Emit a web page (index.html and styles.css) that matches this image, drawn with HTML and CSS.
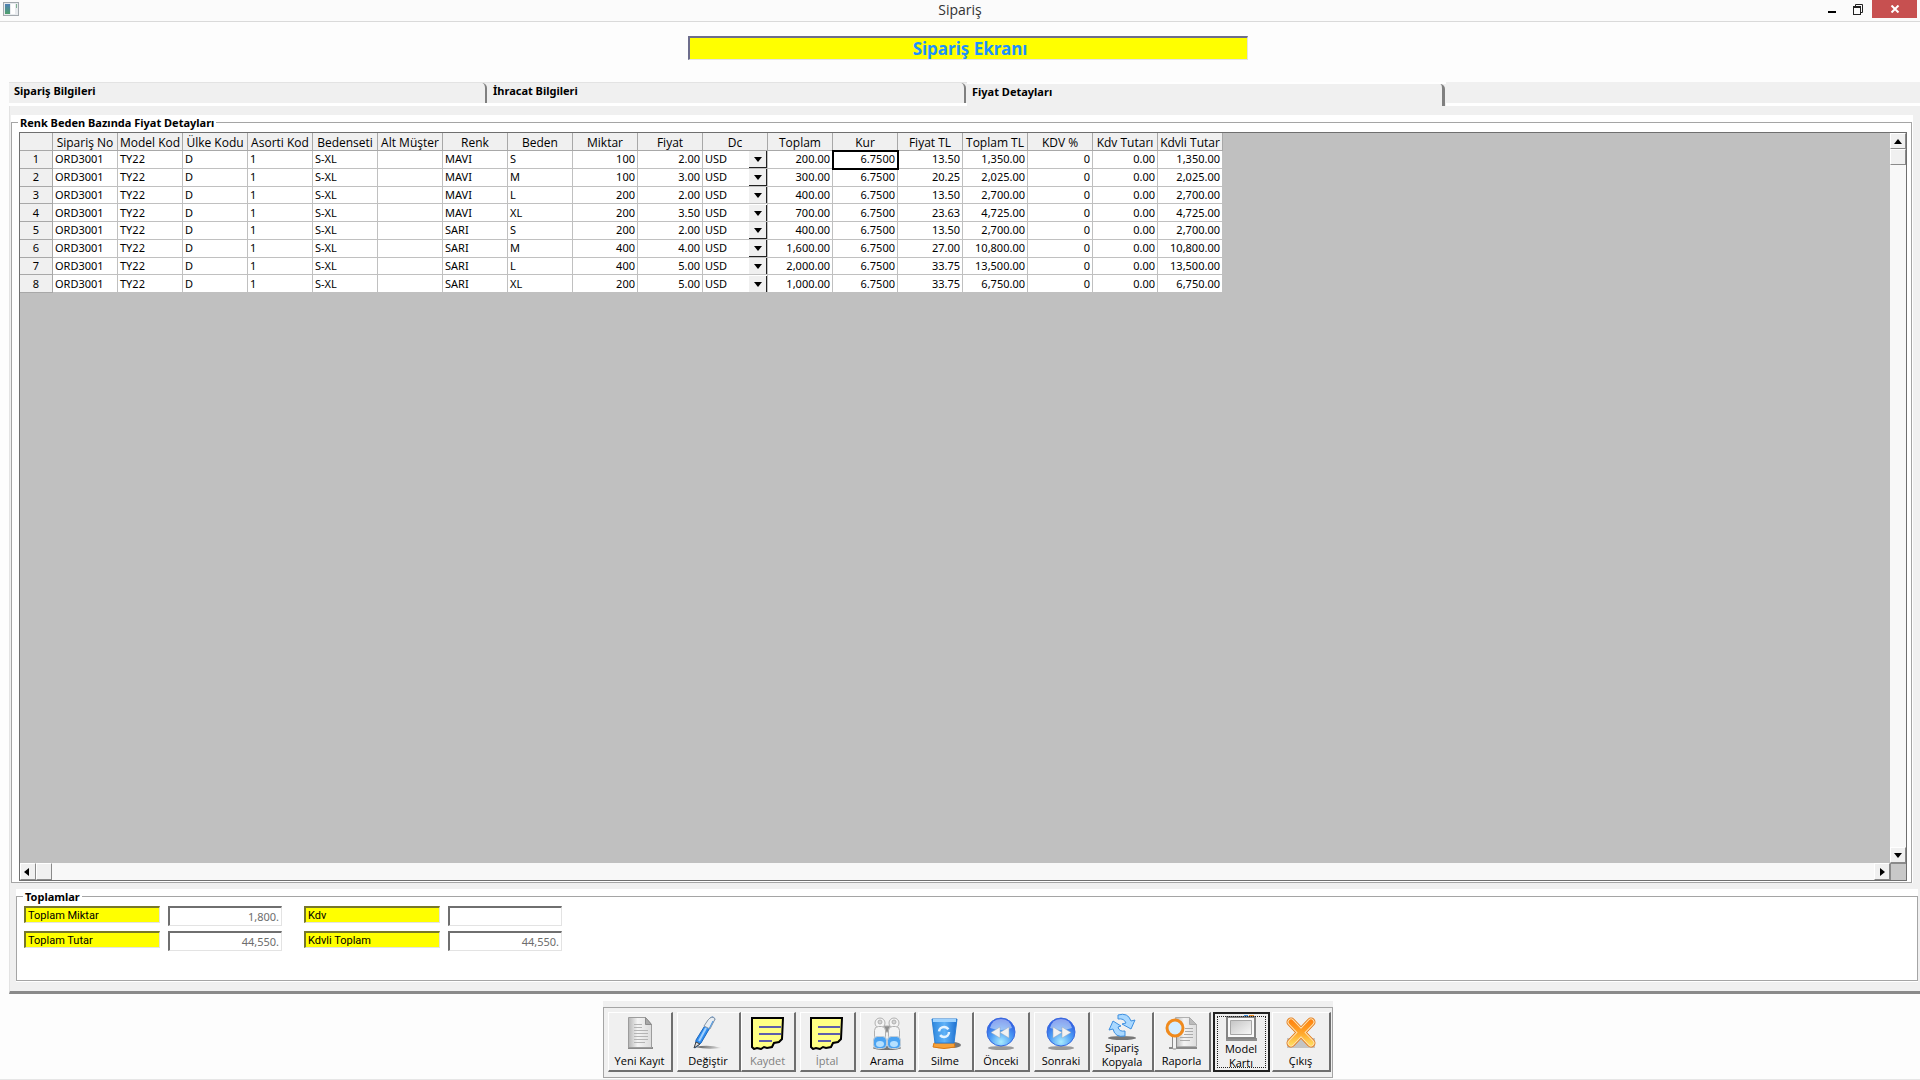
FILE: index.html
```
<!DOCTYPE html>
<html lang="tr">
<head>
  <meta charset="UTF-8" />
  <meta name="viewport" content="width=device-width, initial-scale=1.0"/>
  <title>Sipariş</title>
  <link rel="stylesheet" href="styles.css">
</head>
<body>
  <header class="titlebar">
    <svg class="app-icon" viewBox="0 0 16 14">
      <defs>
        <linearGradient id="appFill" x1="0" y1="0" x2="0" y2="1">
          <stop offset="0" stop-color="#4f7fb5"/>
          <stop offset="1" stop-color="#4fa06a"/>
        </linearGradient>
      </defs>
      <rect x="0.5" y="0.5" width="15" height="13" fill="#e8ebee" stroke="#a3a9ae"/>
      <rect x="2" y="2" width="5" height="10" fill="url(#appFill)"/>
      <rect x="8" y="2" width="4" height="10" fill="#fff"/>
      <rect x="13" y="2" width="1" height="4" fill="#7fb08f"/>
    </svg>
    <span class="window-title">Sipariş</span>
    <div class="window-buttons">
      <button type="button" class="win-btn" aria-label="Simge durumuna küçült">
        <svg width="10" height="12" viewBox="0 0 10 12"><rect x="0" y="7" width="8" height="2" fill="#000"/></svg>
      </button>
      <button type="button" class="win-btn" aria-label="Önceki boyut">
        <svg width="12" height="12" viewBox="0 0 12 12" fill="none" stroke="#222">
          <path d="M2.500 2V0.500h7v8H8"/>
          <rect x="0.500" y="2.500" width="7" height="8"/>
          <path d="M0 3.500h8"/>
        </svg>
      </button>
      <button type="button" class="win-btn win-close" aria-label="Kapat">
        <svg width="10" height="8" viewBox="0 0 10 8" stroke="#fff" stroke-width="2"><path d="M1.500 0.500l7 7M8.500 0.500l-7 7"/></svg>
      </button>
    </div>
  </header>

  <main class="content">
    <h1 class="banner">Sipariş Ekranı</h1>

    <nav class="tabs">
      <a href="#siparis" class="tab">Sipariş Bilgileri</a>
      <a href="#ihracat" class="tab">İhracat Bilgileri</a>
      <a href="#fiyat" class="tab active">Fiyat Detayları</a>
      <div class="tab-filler"></div>
    </nav>

    <section class="panel" id="fiyat">
      <div class="group group-prices">
        <div class="group-box">
          <h2>Renk Beden Bazında Fiyat Detayları</h2>
          <div class="grid-view">
            <div class="grid-body">
              <table class="price-table">
                <thead>
                  <tr>
                    <th class="row-no"></th>
                    <th>Sipariş No</th>
                    <th>Model Kod</th>
                    <th>Ülke Kodu</th>
                    <th>Asorti Kod</th>
                    <th>Bedenseti</th>
                    <th>Alt Müşter</th>
                    <th>Renk</th>
                    <th>Beden</th>
                    <th>Miktar</th>
                    <th>Fiyat</th>
                    <th>Dc</th>
                    <th>Toplam</th>
                    <th>Kur</th>
                    <th>Fiyat TL</th>
                    <th>Toplam TL</th>
                    <th>KDV %</th>
                    <th>Kdv Tutarı</th>
                    <th>Kdvli Tutar</th>
                  </tr>
                </thead>
                <tbody id="priceRows"></tbody>
              </table>
            </div>
            <div class="scroll-v">
              <button type="button" class="scroll-btn" aria-label="Yukarı"><svg width="8" height="5" viewBox="0 0 8 5"><path d="M0 5L4 0l4 5z"/></svg></button>
              <div class="scroll-thumb"></div>
              <div class="scroll-track"></div>
              <button type="button" class="scroll-btn" aria-label="Aşağı"><svg width="8" height="5" viewBox="0 0 8 5"><path d="M0 0h8L4 5z"/></svg></button>
            </div>
            <div class="scroll-h">
              <button type="button" class="scroll-btn" aria-label="Sol"><svg width="8" height="8" viewBox="0 0 8 8"><path d="M5 0v8L0 4z"/></svg></button>
              <div class="scroll-thumb"></div>
              <div class="scroll-track"></div>
              <button type="button" class="scroll-btn" aria-label="Sağ"><svg width="5" height="8" viewBox="0 0 5 8"><path d="M0 0l5 4-5 4z"/></svg></button>
            </div>
            <div class="scroll-corner"></div>
          </div>
        </div>
      </div>

      <div class="group group-totals">
        <div class="group-box">
          <h2>Toplamlar</h2>
          <form class="totals">
            <div class="totals-col">
              <label for="toplamMiktar">Toplam Miktar</label>
              <input type="text" id="toplamMiktar" value="1,800." disabled>
              <label for="toplamTutar">Toplam Tutar</label>
              <input type="text" id="toplamTutar" value="44,550." disabled>
            </div>
            <div class="totals-col">
              <label for="kdv">Kdv</label>
              <input type="text" id="kdv" value="" disabled>
              <label for="kdvliToplam">Kdvli Toplam</label>
              <input type="text" id="kdvliToplam" value="44,550." disabled>
            </div>
          </form>
        </div>
      </div>
    </section>

    <footer class="toolbar">
      <div class="toolbar-frame">
        <div class="btn-group">
          <button type="button" class="tool w65">
            <svg viewBox="0 0 34 34">
              <defs>
                <linearGradient id="paper" x1="0" y1="0" x2="1" y2="0">
                  <stop offset="0" stop-color="#b5b5b5"/><stop offset="0.4" stop-color="#f4f4f4"/><stop offset="1" stop-color="#dcdcdc"/>
                </linearGradient>
              </defs>
              <path d="M5 31h25v2H5z" fill="#8a8a8a"/>
              <path d="M5.500 1.500h17l6 7v23h-23z" fill="url(#paper)" stroke="#9c9c9c"/>
              <path d="M22.500 1.500v7h6z" fill="#a8a8a8" stroke="#8c8c8c"/>
              <path d="M11 8.500h8M11 11.500h8M11 14.500h14M11 17.500h14M11 20.500h14M11 23.500h14M11 26.500h11" stroke="#b4b4b4"/>
            </svg>
            <span>Yeni Kayıt</span>
          </button>
        </div>
        <div class="btn-group">
          <button type="button" class="tool w64">
            <svg viewBox="0 0 34 34">
              <defs>
                <linearGradient id="shade" x1="0" y1="0" x2="1" y2="0">
                  <stop offset="0" stop-color="#555"/><stop offset="1" stop-color="#ddd"/>
                </linearGradient>
              </defs>
              <path d="M4 31q14-3 26 1q-14 2-26-1z" fill="url(#shade)"/>
              <path d="M18 3q4-4 6 0L10 27l-6 5 1-8z" fill="#2f8df0" stroke="#1b66bd"/>
              <path d="M17 4q4-5 7-1l-5 10-6-3z" fill="#e9eef3" stroke="#8c9aa8"/>
              <path d="M15 12L8 25" stroke="#9fd0ff" stroke-width="2"/>
              <path d="M22 5l-4 8" stroke="#3b8ee0" stroke-width="1"/>
              <path d="M5 26l4 2-6 4z" fill="#ddd" stroke="#444"/>
            </svg>
            <span>Değiştir</span>
          </button>
          <button type="button" class="tool w55" disabled>
            <svg viewBox="0 0 34 34">
              <path d="M1 2h31l-1 21-3 3-5 1-2 4-5 1-3-1-3 2-4-1-3 1-2-2z" fill="#ffff84" stroke="#000" stroke-width="2"/>
              <path d="M8 11h22M8 18h22M8 25h13" stroke="#2a2ab8" stroke-width="1.500"/>
            </svg>
            <span>Kaydet</span>
          </button>
        </div>
        <div class="btn-group">
          <button type="button" class="tool w56" disabled>
            <svg viewBox="0 0 34 34">
              <path d="M1 2h31l-1 21-3 3-5 1-2 4-5 1-3-1-3 2-4-1-3 1-2-2z" fill="#ffff84" stroke="#000" stroke-width="2"/>
              <path d="M8 11h22M8 18h22M8 25h13" stroke="#2a2ab8" stroke-width="1.500"/>
            </svg>
            <span>İptal</span>
          </button>
        </div>
        <div class="btn-group">
          <button type="button" class="tool w56">
            <svg viewBox="0 0 34 34">
              <ellipse cx="17" cy="32" rx="14" ry="2" fill="#777"/>
              <g fill="#f4f4f4" stroke="#b0b0b0">
                <circle cx="10" cy="7" r="5"/><circle cx="24" cy="7" r="5"/>
                <circle cx="10" cy="6" r="2" fill="#d4d4d4"/><circle cx="24" cy="6" r="2" fill="#d4d4d4"/>
                <path d="M14 10h6v6h-6z" fill="#8d8d8d"/>
                <rect x="4.500" y="10.500" width="11" height="14" rx="4"/>
                <rect x="18.500" y="10.500" width="11" height="14" rx="4"/>
              </g>
              <rect x="3.500" y="20.500" width="13" height="12" rx="4" fill="#4ba3f2" stroke="#c3ccd4"/>
              <rect x="17.500" y="20.500" width="13" height="12" rx="4" fill="#4ba3f2" stroke="#c3ccd4"/>
              <ellipse cx="10" cy="28" rx="4" ry="3" fill="#b5e0ff"/>
              <ellipse cx="24" cy="28" rx="4" ry="3" fill="#b5e0ff"/>
            </svg>
            <span>Arama</span>
          </button>
        </div>
        <div class="btn-group tight">
          <button type="button" class="tool w56">
            <svg viewBox="0 0 34 34">
              <defs>
                <linearGradient id="bin" x1="0" y1="0" x2="1" y2="0">
                  <stop offset="0" stop-color="#2d86dc"/><stop offset="0.500" stop-color="#5fb2f8"/><stop offset="1" stop-color="#1d6fd0"/>
                </linearGradient>
              </defs>
              <ellipse cx="25" cy="29" rx="8" ry="3" fill="#777"/>
              <path d="M6 27h20l1 4q-11 3-22 0z" fill="#f7a138" stroke="#d97a16"/>
              <path d="M4 3h25l-3 24H7z" fill="url(#bin)" stroke="#2b7fd4"/>
              <path d="M5 3h23v3H5z" fill="#9ed3ff"/>
              <circle cx="16" cy="16" r="5" fill="none" stroke="#e4f3ff" stroke-width="2.500" stroke-dasharray="12 4"/>
            </svg>
            <span>Silme</span>
          </button>
          <button type="button" class="tool w56">
            <svg viewBox="0 0 34 34">
              <defs>
                <radialGradient id="ball" cx="0.5" cy="0.85" r="0.8">
                  <stop offset="0" stop-color="#a9ecff"/><stop offset="0.5" stop-color="#4d9df5"/><stop offset="1" stop-color="#2a55e0"/>
                </radialGradient>
              </defs>
              <ellipse cx="17" cy="32" rx="13" ry="2" fill="#9a9a9a"/>
              <circle cx="17" cy="16" r="14" fill="url(#ball)" stroke="#3a6be0"/>
              <path d="M6 12q2-9 11-9t11 9q-11 4-22 0z" fill="#fff" opacity="0.45"/>
              <path d="M16 11v11l-9-5.500zM25 11v11l-9-5.500z" fill="#f2f2f2" stroke="#9aa6b5" stroke-width="0.500"/>
            </svg>
            <span>Önceki</span>
          </button>
        </div>
        <div class="btn-group">
          <button type="button" class="tool w56">
            <svg viewBox="0 0 34 34">
              <ellipse cx="17" cy="32" rx="13" ry="2" fill="#9a9a9a"/>
              <circle cx="17" cy="16" r="14" fill="url(#ball)" stroke="#3a6be0"/>
              <path d="M6 12q2-9 11-9t11 9q-11 4-22 0z" fill="#fff" opacity="0.45"/>
              <path d="M9 11v11l9-5.500zM18 11v11l9-5.500z" fill="#f2f2f2" stroke="#9aa6b5" stroke-width="0.500"/>
            </svg>
            <span>Sonraki</span>
          </button>
        </div>
        <div class="btn-group tight">
          <button type="button" class="tool w62 two-line">
            <svg viewBox="0 0 34 28">
              <ellipse cx="17" cy="25" rx="14" ry="2" fill="#777"/>
              <g fill="#a9d8ff" stroke="#3d8fe0">
                <path d="M13 2q10-3 13 6l4-1-4 9-9-5 4-1q-2-5-8-4z"/>
                <path d="M20 23q-10 2-12-7l-4 1 4-9 8 5-3 1q1 5 7 4z"/>
              </g>
            </svg>
            <span>Sipariş Kopyala</span>
          </button>
          <button type="button" class="tool w57">
            <svg viewBox="0 0 34 34">
              <path d="M4 31h28v2H4z" fill="#8a8a8a"/>
              <path d="M10.500 1.500h14l7 7v22h-21z" fill="url(#paper)" stroke="#b0b0b0"/>
              <path d="M24.500 1.500v7h7z" fill="#bbb" stroke="#aaa"/>
              <path d="M20 12.500h8M20 15.500h8M19 18.500h9M15 21.500h13M15 24.500h10" stroke="#aaa"/>
              <rect x="7.500" y="20" width="4" height="13" rx="1" fill="#f2f2f2" stroke="#8a8a8a"/>
              <circle cx="10" cy="12" r="8" fill="#d4edff" stroke="#f08a1d" stroke-width="3"/>
            </svg>
            <span>Raporla</span>
          </button>
        </div>
        <div class="btn-group tight">
          <button type="button" class="tool w57 two-line focused">
            <svg viewBox="0 0 34 28">
              <defs>
                <linearGradient id="card" x1="0" y1="0" x2="1" y2="1">
                  <stop offset="0" stop-color="#c4c4c4"/><stop offset="1" stop-color="#f8f8f8"/>
                </linearGradient>
              </defs>
              <path d="M2 24h31v3H2z" fill="#8f8f8f"/>
              <path d="M3 3h28v21H3z" fill="#fafafa" stroke="#858585" stroke-width="2"/>
              <path d="M6.500 6.500h21v14h-21z" fill="url(#card)" stroke="#a5a5a5"/>
              <path d="M20 1.500h4" stroke="#3d8fe0"/>
              <path d="M25 1.500h5" stroke="#f08a1d"/>
            </svg>
            <span>Model Kartı</span>
          </button>
        </div>
        <div class="btn-group tight">
          <button type="button" class="tool w59">
            <svg viewBox="0 0 34 34">
              <defs>
                <linearGradient id="cross" gradientUnits="userSpaceOnUse" x1="0" y1="2" x2="0" y2="32">
                  <stop offset="0" stop-color="#ff7d0a"/><stop offset="0.500" stop-color="#ffa62b"/><stop offset="1" stop-color="#ffe96b"/>
                </linearGradient>
              </defs>
              <path d="M3 22h28v10H3z" fill="#c4c4c4"/>
              <g fill="none" stroke-linecap="round">
                <path d="M7 6l20 21M27 6L7 27" stroke="#e07a1a" stroke-width="9"/>
                <path d="M7 6l20 21M27 6L7 27" stroke="#ffe2b0" stroke-width="7"/>
                <path d="M7 6l20 21M27 6L7 27" stroke="url(#cross)" stroke-width="5"/>
              </g>
            </svg>
            <span>Çıkış</span>
          </button>
        </div>
      </div>
    </footer>
  </main>

  <script>
    // renk, beden, miktar, fiyat, toplam, kur, fiyat TL, toplam TL, KDV %, kdv tutarı, kdvli tutar
    const rows = [
      ['MAVI', 'S', '100', '2.00', '200.00', '6.7500', '13.50', '1,350.00', '0', '0.00', '1,350.00'],
      ['MAVI', 'M', '100', '3.00', '300.00', '6.7500', '20.25', '2,025.00', '0', '0.00', '2,025.00'],
      ['MAVI', 'L', '200', '2.00', '400.00', '6.7500', '13.50', '2,700.00', '0', '0.00', '2,700.00'],
      ['MAVI', 'XL', '200', '3.50', '700.00', '6.7500', '23.63', '4,725.00', '0', '0.00', '4,725.00'],
      ['SARI', 'S', '200', '2.00', '400.00', '6.7500', '13.50', '2,700.00', '0', '0.00', '2,700.00'],
      ['SARI', 'M', '400', '4.00', '1,600.00', '6.7500', '27.00', '10,800.00', '0', '0.00', '10,800.00'],
      ['SARI', 'L', '400', '5.00', '2,000.00', '6.7500', '33.75', '13,500.00', '0', '0.00', '13,500.00'],
      ['SARI', 'XL', '200', '5.00', '1,000.00', '6.7500', '33.75', '6,750.00', '0', '0.00', '6,750.00']
    ];

    const num = v => `<td class="num">${v}</td>`;

    document.getElementById('priceRows').innerHTML = rows.map((r, i) => `
      <tr>
        <th class="row-no" scope="row">${i + 1}</th>
        <td>ORD3001</td><td>TY22</td><td>D</td><td>1</td><td>S-XL</td><td></td>
        <td>${r[0]}</td><td>${r[1]}</td>${num(r[2])}${num(r[3])}
        <td class="currency"><div class="combo"><select aria-label="Dc ${i + 1}"><option>USD</option><option>EUR</option><option>TL</option></select></div></td>
        ${num(r[4])}
        <td class="num${i === 0 ? ' selected' : ''}">${r[5]}</td>
        ${r.slice(6).map(num).join('')}
      </tr>`).join('');
  </script>
</body>
</html>
```
FILE: styles.css
```
* {
    margin: 0;
    padding: 0;
    box-sizing: border-box;
}
body {
    display: flex;
    flex-direction: column;
    min-height: 100vh;
    background: #fdfdfd;
    border-bottom: 1px solid #e6e6e6;
    color: #000;
    font-family: 'Noto Sans', 'Open Sans', sans-serif;
    font-size: 11px;
    line-height: 14px;
}
button, input, select {
    font: inherit;
    color: inherit;
}

/* window title bar */
.titlebar {
    display: grid;
    grid-template-columns: 1fr auto 1fr;
    height: 22px;
    padding: 0 3px;
    background: #fbfbfb;
    border-bottom: 1px solid #dadada;
}
.app-icon {
    width: 16px;
    height: 14px;
    margin-top: 2px;
}
.window-title {
    font-family: 'Open Sans', sans-serif;
    font-size: 14px;
    line-height: 20px;
    color: #333;
}
.window-buttons {
    display: flex;
    justify-content: flex-end;
}
.win-btn {
    width: 26px;
    height: 18px;
    border: none;
    background: none;
}
.win-btn svg {
    display: block;
    margin: 2px auto 0;
}
.win-close {
    width: 45px;
    background: #c75050;
}
.win-close svg {
    margin-top: 0;
}

.content {
    flex: 1;
    display: flex;
    flex-direction: column;
    padding-left: 9px;
}
.banner {
    align-self: center;
    width: 560px;
    margin: 14px 0 22px 6px;
    padding-left: 4px;
    border: 1px solid #e3e3e3;
    border-top: 2px solid #6d6d8c;
    border-left: 2px solid #6d6d8c;
    background: #ffff00;
    color: #1e90ff;
    text-align: center;
    font-size: 17px;
    line-height: 21px;
}

/* tabs */
.tabs {
    display: flex;
    font-weight: bold;
}
.tab {
    position: relative;
    width: 479px;
    height: 24px;
    padding: 1px 5px;
    border-top: 1px solid #e3e3e3;
    border-bottom: 3px solid #fff;
    background: #f0f0f0;
    color: #000;
    text-decoration: none;
}
.tab::after {
    content: "";
    position: absolute;
    top: 0;
    right: 1px;
    width: 5px;
    height: 20px;
    border-right: 2px solid #808080;
    border-top-right-radius: 5px;
}
.tab.active {
    border-top: 2px solid #fff;
    border-bottom-color: #f0f0f0;
}
.tab.active::after {
    height: 22px;
    border-right-width: 3px;
}
.tab-filler {
    flex: 1;
    background: #f0f0f0;
    border-bottom: 3px solid #fff;
}

.panel {
    flex: 1;
    display: flex;
    flex-direction: column;
    gap: 6px;
    padding: 9px 2px 9px 1px;
    background: #f0f0f0;
    border-left: 1px solid #e3e3e3;
    border-bottom: 3px solid #8a8a8a;
}
.group {
    display: flex;
    flex-direction: column;
    padding-top: 7px;
    background: #fff;
}
.group-prices {
    flex: 1;
    margin-right: 5px;
    padding-right: 1px;
}
.group-totals {
    margin-left: 5px;
    padding-bottom: 1px;
}
.group-box {
    flex: 1;
    display: flex;
    flex-direction: column;
    border: 1px solid #a5a5a5;
}
.group-box h2 {
    align-self: flex-start;
    margin: -7px 0 0 6px;
    padding: 0 2px;
    background: #fff;
    font-size: 11px;
    font-weight: bold;
    line-height: 14px;
}

/* price grid */
.grid-view {
    flex: 1;
    display: grid;
    grid-template-columns: 1fr 16px;
    grid-template-rows: 1fr 17px;
    margin: 2px 4px 1px 7px;
    border: 1px solid #6f6f6f;
    background: #c0c0c0;
}
.grid-body {
    overflow: hidden;
}
.price-table {
    width: 1203px;
    height: 160px;
    table-layout: fixed;
    border-collapse: separate;
    border-spacing: 0;
    line-height: 14px;
}
.price-table thead tr {
    height: 18px;
}
.price-table th, .price-table td {
    border-right: 1px solid #c0c0c0;
    border-bottom: 1px solid #c0c0c0;
    white-space: nowrap;
    overflow: hidden;
}
.price-table th {
    background: #f0f0f0;
    border-color: #a8a8a8;
    font-weight: normal;
}
.price-table thead th {
    padding-top: 2px;
    font-family: 'Open Sans', sans-serif;
    font-size: 12px;
}
.price-table .row-no {
    width: 33px;
}
.price-table td {
    padding: 0 2px;
    background: #fff;
}
.price-table .num {
    text-align: right;
}
.price-table td.selected {
    outline: 2px solid #000;
    outline-offset: -1px;
}
.price-table td.currency {
    padding: 0;
}
.combo {
    position: relative;
    height: 16px;
}
.combo select {
    display: block;
    width: 100%;
    height: 16px;
    padding-left: 2px;
    border: none;
    background: #fff;
    line-height: 14px;
    appearance: none;
}
.combo::before {
    content: "";
    position: absolute;
    top: 0;
    right: 0;
    width: 17px;
    height: 16px;
    background: #f0f0f0;
    border-right: 1px solid #222;
    border-bottom: 1px solid #222;
    pointer-events: none;
}
.combo::after {
    content: "";
    position: absolute;
    top: 6px;
    right: 5px;
    border: 4px solid transparent;
    border-top: 5px solid #000;
    border-bottom: none;
    pointer-events: none;
}

/* classic scroll bars */
.scroll-v, .scroll-h {
    display: flex;
    background: #f8f8f8;
}
.scroll-v {
    flex-direction: column;
}
.scroll-track {
    flex: 1;
}
.scroll-btn, .scroll-thumb {
    display: flex;
    align-items: center;
    justify-content: center;
    width: 16px;
    height: 16px;
    background: #f0f0f0;
    border: 1px solid #fff;
    border-right-color: #8a8a8a;
    border-bottom-color: #8a8a8a;
}
.scroll-h .scroll-btn, .scroll-h .scroll-thumb {
    height: 17px;
}
.scroll-corner {
    background: #c8c8c8;
    border-top: 1px solid #8a8a8a;
    border-left: 1px solid #8a8a8a;
}

/* totals */
.totals {
    display: flex;
    gap: 22px;
    margin: 2px 0 29px 7px;
}
.totals-col {
    display: grid;
    grid-template-columns: 136px 114px;
    gap: 5px 8px;
}
.totals label {
    height: 17px;
    padding-left: 2px;
    background: #ffff00;
    border: 1px solid #e3e3e3;
    border-top: 2px solid #77772a;
    border-left: 2px solid #77772a;
    font-family: Roboto, sans-serif;
    line-height: 16px;
}
.totals input {
    width: 114px;
    height: 20px;
    padding: 0 2px;
    border: 1px solid #e3e3e3;
    border-top: 2px solid #6f6f6f;
    border-left: 2px solid #6f6f6f;
    background: #fff;
    color: #6d6d6d;
    text-align: right;
}

/* bottom toolbar */
.toolbar {
    align-self: center;
    margin: 7px 0 1px 6px;
    padding-top: 6px;
    background: #f0f0f0;
    font-family: 'Open Sans', sans-serif;
}
.toolbar-frame {
    display: flex;
    padding: 4px 1px 5px 4px;
    border: 1px solid #a5a5a5;
}
.btn-group {
    display: flex;
}
.btn-group + .btn-group {
    margin-left: 4px;
}
.btn-group + .tight {
    margin-left: 2px;
}
.tool {
    display: flex;
    flex-direction: column;
    align-items: center;
    justify-content: space-between;
    height: 60px;
    padding: 3px 2px 2px;
    background: #f0f0f0;
    border: 1px solid #fff;
    border-right: 2px solid #6f6f6f;
    border-bottom: 2px solid #6f6f6f;
}
.tool:disabled {
    color: #808080;
}
.tool svg {
    flex: none;
    width: 34px;
    height: 34px;
}
.tool span {
    line-height: 14px;
}
.tool.two-line {
    padding-top: 0;
}
.tool.two-line svg {
    height: 28px;
}
.tool.focused {
    border: 2px solid #222;
    outline: 1px dotted #222;
    outline-offset: -5px;
}
.w55 { width: 55px; }
.w56 { width: 56px; }
.w57 { width: 57px; }
.w59 { width: 59px; }
.w62 { width: 62px; }
.w64 { width: 64px; }
.w65 { width: 65px; }
```
